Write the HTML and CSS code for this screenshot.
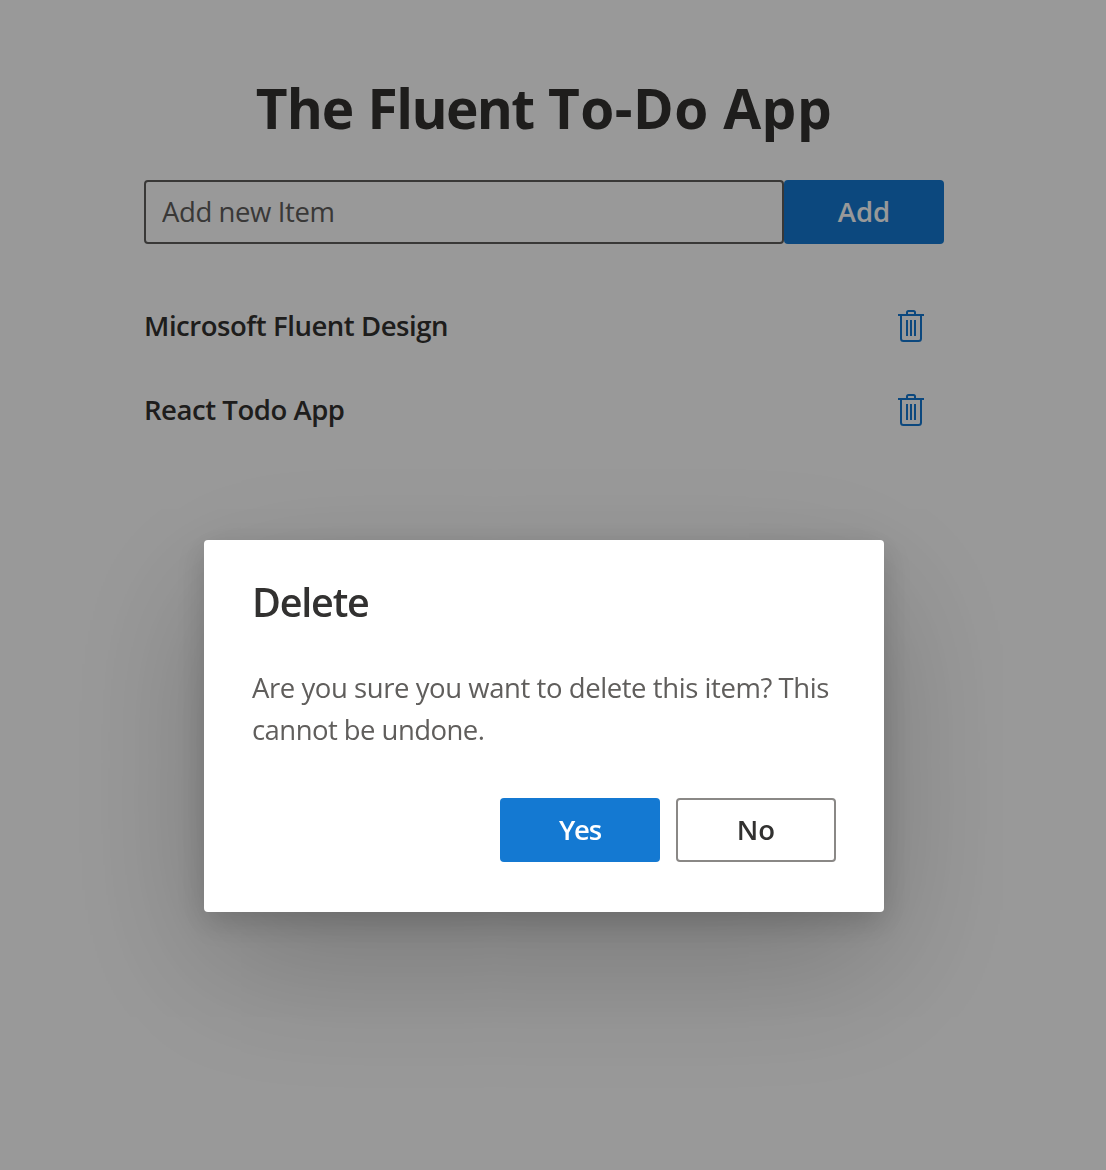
FILE: index.html
```html
<!DOCTYPE html>
<html lang="en">
<head>
<meta charset="utf-8">
<title>The Fluent To-Do App</title>
<link rel="stylesheet" href="styles.css">
</head>
<body>
<svg class="sprite" aria-hidden="true">
  <symbol id="trash" viewBox="0 0 26 32">
    <path d="M0 5H26M9 5V2.500Q9 1 10.500 1H15.500Q17 1 17 2.500V5M3 5V28.500Q3 31 5.500 31H20.500Q23 31 23 28.500V5M9 10V26M13 10V26M17 10V26" fill="none" stroke="currentColor" stroke-width="2"/>
  </symbol>
</svg>
<main class="app">
  <h1 class="title"><span class="tight">The</span> <span class="tighter">Fluent</span> <span class="wide">To-Do</span> <span class="wide">App</span></h1>
  <form class="add-form">
    <input class="add-input" type="text" placeholder="Add new Item">
    <button class="button button-primary" type="button">Add</button>
  </form>
  <ul class="items">
    <li class="item"><span>Microsoft Fluent Design</span><svg class="icon"><use href="#trash"/></svg></li>
    <li class="item"><span>React Todo App</span><svg class="icon"><use href="#trash"/></svg></li>
  </ul>
</main>
<div class="overlay">
  <section class="dialog" role="dialog">
    <h2 class="dialog-title">Delete</h2>
    <p class="dialog-text">Are you sure you want to delete this item? This<br><span class="second-line">cannot be undone.</span></p>
    <div class="dialog-actions">
      <button class="button button-yes" type="button">Yes</button>
      <button class="button button-default" type="button">No</button>
    </div>
  </section>
</div>
</body>
</html>
```

FILE: styles.css
```css
* { box-sizing: border-box; }
body {
  margin: 0;
  height: 1170px;
  overflow: hidden;
  background: #fff;
  color: #323130;
  font-family: "Open Sans", "Noto Sans", sans-serif;
  font-size: 27.5px;
}
.sprite { display: none; }
.app {
  width: 1088px;
  padding: 68px 144px 0;
}
.title {
  margin: 0;
  height: 112px;
  font-size: 55px;
  line-height: 80px;
  font-weight: 700;
  text-align: center;
  white-space: nowrap;
}
.tight { letter-spacing: -1px; }
.tighter { letter-spacing: -1.600px; }
.wide { letter-spacing: .5px; }
.add-form { display: flex; }
.add-input {
  width: 640px;
  height: 64px;
  padding: 0 16px 2px;
  border: 2px solid #605e5c;
  border-radius: 4px;
  background: #fff;
  font: inherit;
  letter-spacing: -.4px;
}
.add-input::placeholder { color: #605e5c; opacity: 1; }
.button {
  width: 160px;
  height: 64px;
  padding: 0 0 2px;
  border: 0;
  border-radius: 4px;
  font: inherit;
  font-weight: 600;
}
.button-primary, .button-yes { background: #1479d2; color: #fff; }
.button-yes { letter-spacing: -1.200px; }
.button-default {
  border: 2px solid #8a8886;
  background: #fff;
  color: #323130;
}
.items {
  margin: 40px 0 0;
  padding: 0;
  list-style: none;
}
.item {
  display: flex;
  align-items: center;
  justify-content: space-between;
  height: 84px;
  padding-right: 20px;
  font-weight: 600;
  letter-spacing: -.45px;
}
.item span { padding-bottom: 2px; }
.icon { width: 26px; height: 32px; color: #1479d2; }
.overlay {
  position: fixed;
  inset: 0;
  padding: 540px 0 0 204px;
  background: rgba(0, 0, 0, .4);
}
.dialog {
  width: 680px;
  height: 372px;
  padding: 32px 48px 50px;
  border-radius: 4px;
  background: #fff;
  box-shadow: 0 51.2px 145px rgba(0, 0, 0, .22), 0 9.6px 32px rgba(0, 0, 0, .18);
}
.dialog-title {
  margin: 0 0 35px;
  font-size: 39.5px;
  line-height: 60px;
  font-weight: 600;
  letter-spacing: -1.200px;
}
.dialog-text {
  margin: 0 0 47px;
  color: #605e5c;
  line-height: 42px;
  letter-spacing: -.43px;
  white-space: nowrap;
}
.second-line { letter-spacing: -.55px; }
.dialog-actions {
  display: flex;
  justify-content: flex-end;
  gap: 16px;
}
```
